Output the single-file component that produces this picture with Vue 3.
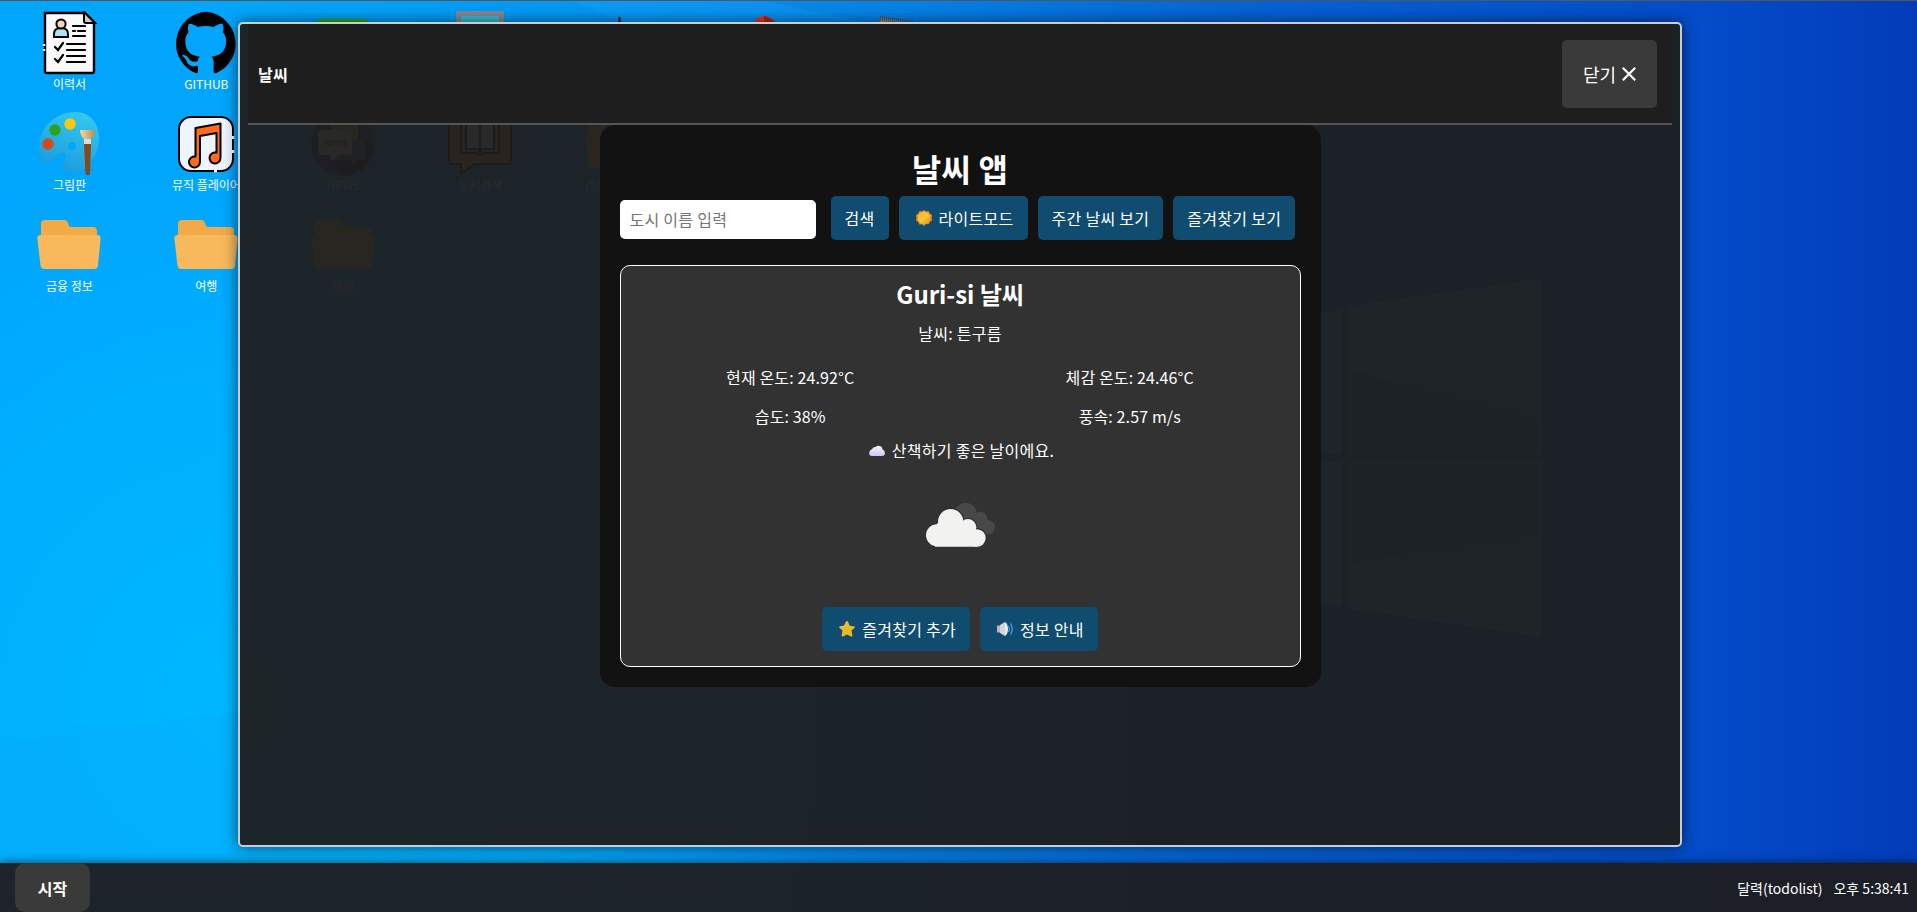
<script setup>
import { ref } from 'vue'

const city = ref('')

const desktopIcons = [
  { kind: 'resume', label: '이력서' },
  { kind: 'github', label: 'GITHUB' },
  { kind: 'green', label: '' },
  { kind: 'screen', label: '' },
  { kind: 'stick', label: '' },
  { kind: 'red', label: '' },
  { kind: 'note', label: '' },
  { kind: 'paint', label: '그림판', row: 2 },
  { kind: 'music', label: '뮤직 플레이어' },
  { kind: 'news', label: 'NEWS' },
  { kind: 'book', label: '도서검색' },
  { kind: 'folder', label: '(팀)프로젝트' },
  { kind: 'folder', label: '금융 정보', row: 3 },
  { kind: 'folder', label: '여행' },
  { kind: 'folder', label: '영화' },
]

const details = ['현재 온도: 24.92°C', '체감 온도: 24.46°C', '습도: 38%', '풍속: 2.57 m/s']
</script>

<template>
  <div class="desktop">
    <svg class="wallpaper" viewBox="0 0 1917 912" preserveAspectRatio="none">
      <defs>
        <linearGradient id="sky" x1="0" x2="1" y1="0" y2="0">
          <stop offset="0" stop-color="#00a5fc" />
          <stop offset="0.13" stop-color="#02a6fc" />
          <stop offset="0.32" stop-color="#0396f4" />
          <stop offset="0.48" stop-color="#0580e6" />
          <stop offset="0.65" stop-color="#0563d6" />
          <stop offset="0.88" stop-color="#034dcb" />
          <stop offset="1" stop-color="#033cb8" />
        </linearGradient>
        <radialGradient id="glow" gradientUnits="userSpaceOnUse" cx="240" cy="700" r="640">
          <stop offset="0" stop-color="#00b8ff" />
          <stop offset="0.5" stop-color="#00b2ff" stop-opacity="0.75" />
          <stop offset="1" stop-color="#00a8ff" stop-opacity="0" />
        </radialGradient>
      </defs>
      <rect width="1917" height="912" fill="url(#sky)" />
      <rect width="1000" height="912" fill="url(#glow)" />
      <path d="M0 744L238 712V912H0z" fill="#0aa8f5" opacity=".25" />
      <path d="M570 0L640 30H900L760 0z" fill="#1ca9ff" opacity=".25" />
      <g fill="#50b8d8" opacity=".6">
        <path d="M1349 307L1540 280V454H1349z" />
        <path d="M1349 462H1540V635L1349 608z" />
        <path d="M1140 337L1342 310V454H1140z" />
        <path d="M1140 462H1342V607L1140 580z" />
      </g>
      <path d="M1349 370L1540 418V454H1349zM1349 462H1540V536L1349 563z" fill="#0560d0" opacity=".4" />
      <path d="M1349 307L1540 280V454H1349zM1349 462H1540V635L1349 608z" fill="none" stroke="#7ae0e0" stroke-width="2" opacity=".4" />
    </svg>

    <ul class="icons">
      <li v-for="(item, i) in desktopIcons" :key="i" :class="['icon', item.row && 'row-start']">
        <svg v-if="item.kind === 'resume'" width="64" height="64" viewBox="0 0 64 64">
          <path d="M8 2h40l9 9v49a2 2 0 0 1-2 2H10a2 2 0 0 1-2-2z" fill="#fafafa" stroke="#000" stroke-width="2.4" />
          <path d="M47 1v9a2 2 0 0 0 2 2h9z" fill="#ccc" stroke="#000" stroke-width="2" />
          <path d="M17 26v-3q0-6 7-6t7 6v3z" fill="#a9e2fb" stroke="#000" stroke-width="2" />
          <circle cx="24" cy="13" r="4.6" fill="#ffd0bd" stroke="#000" stroke-width="2" />
          <path d="M36 15h12M36 20h2M41 20h7M36 25h12M30 33h18M30 39h18M30 45h18M30 51h18M18 36l3 3 5-7M18 48l3 3 5-7" fill="none" stroke="#000" stroke-width="2.2" stroke-linecap="round" />
          <path d="M7 33v2M7 38v2" stroke="#fff" stroke-width="2.5" />
        </svg>
        <svg v-else-if="item.kind === 'github'" width="64" height="64" viewBox="0 0 16 16">
          <path d="M8 .2a8 8 0 0 0-2.53 15.38c.4.07.53-.17.53-.39v-1.5c-2.05.4-2.6-.55-2.77-1.03-.09-.23-.48-.95-.82-1.14-.28-.15-.68-.52-.01-.53.63-.01 1.08.58 1.23.82.72 1.21 1.87.87 2.33.66.07-.52.28-.87.51-1.07-1.78-.2-3.64-.89-3.64-3.95 0-.87.31-1.59.82-2.15-.08-.2-.36-1.02.08-2.12 0 0 .67-.21 2.2.82a7.6 7.6 0 0 1 4 0c1.53-1.04 2.2-.82 2.2-.82.44 1.1.16 1.92.08 2.12.51.56.82 1.27.82 2.15 0 3.07-1.87 3.75-3.65 3.95.29.25.54.73.54 1.48v2.3c0 .21.15.46.55.38A8 8 0 0 0 8 .2z" fill="#000" />
        </svg>
        <svg v-else-if="item.kind === 'green'" width="64" height="64" viewBox="0 0 64 64">
          <rect x="5" y="8" width="54" height="52" rx="6" fill="#2fae12" />
        </svg>
        <svg v-else-if="item.kind === 'screen'" width="64" height="64" viewBox="0 0 64 64">
          <path d="M8 1q0-1 1-1h46q1 0 1 1v60H8z" fill="#858a94" />
          <rect x="13" y="5" width="38" height="50" fill="#38bfd8" />
        </svg>
        <svg v-else-if="item.kind === 'stick'" width="64" height="64" viewBox="0 0 64 64">
          <path d="M34.5 6v50" stroke="#000" stroke-width="2" />
        </svg>
        <svg v-else-if="item.kind === 'red'" width="64" height="64" viewBox="0 0 64 64">
          <path d="M42 5a16 16 0 0 1 14 16H28A16 16 0 0 1 42 5z" fill="#e23c26" />
          <path d="M42 5a16 16 0 0 1 14 16H42z" fill="#b82218" />
        </svg>
        <svg v-else-if="item.kind === 'note'" width="64" height="64" viewBox="0 0 64 64">
          <path d="M21 7L54 12 50 56 16 50z" fill="#a2927f" />
          <path d="M21 7L54 12" stroke="#555" stroke-width="5" stroke-dasharray="1 1" />
        </svg>
        <svg v-else-if="item.kind === 'paint'" width="64" height="64" viewBox="0 0 64 64">
          <defs>
            <linearGradient id="palette" x1=".7" x2=".3" y1="0" y2="1">
              <stop offset="0" stop-color="#35c6ee" />
              <stop offset="1" stop-color="#1b9bdc" />
            </linearGradient>
            <linearGradient id="bristle" x1="0" x2="1" y1="0" y2="0">
              <stop offset="0" stop-color="#f3d9a8" />
              <stop offset="1" stop-color="#b98d51" />
            </linearGradient>
          </defs>
          <path fill-rule="evenodd" d="M38 0C22 0 2 12 2 36c0 8 2 15 7 15 6 0 10-10 17-10 5 0 4 5 1 9-4 6 0 11 6 11 16 0 29-17 29-35C62 10 52 0 38 0zM35 30a4 4 0 1 1 0 8 4 4 0 0 1 0-8z" fill="url(#palette)" />
          <circle cx="33" cy="12" r="5.7" fill="#fdc70c" />
          <circle cx="18" cy="18" r="5.7" fill="#2ba31b" />
          <circle cx="11" cy="32" r="5.7" fill="#d94a17" />
          <path d="M47 32h7l-1 30q-2.500 2.500-4.500 0z" fill="#8a4813" />
          <path d="M47 27h7v5h-7z" fill="#d9dce0" />
          <path d="M43 18h15q-.5 6-4 9h-7q-3.500-3-4-9z" fill="url(#bristle)" />
        </svg>
        <svg v-else-if="item.kind === 'music'" width="64" height="64" viewBox="0 0 64 64">
          <rect x="5" y="5" width="54" height="54" rx="12" fill="#eff5ff" stroke="#000" stroke-width="2" />
          <path d="M21.500 16L46.500 11.500V46a5.500 5.500 0 1 1-4-5.300V21L26 24v26a5.500 5.500 0 1 1-4.500-5.500z" fill="#ff6a1f" stroke="#000" stroke-width="2" stroke-linejoin="round" />
          <path d="M59 24v3M59 38v3M40 59h3" stroke="#fff" stroke-width="2.5" />
        </svg>
        <svg v-else-if="item.kind === 'news'" width="64" height="64" viewBox="0 0 64 64">
          <circle cx="32" cy="32" r="32" fill="#24397a" />
          <path d="M32 64L22 48 56 26 63 34A32 32 0 0 1 32 64z" fill="#1c2340" />
          <rect x="20" y="6" width="27" height="22" rx="4" fill="#f2c04c" />
          <path d="M22 27h28a4 4 0 0 1 4 4v13a4 4 0 0 1-4 4h-5v6l-7-6H22z" fill="#277a6f" />
          <path d="M11 18h26a4 4 0 0 1 4 4v17a4 4 0 0 1-4 4h-9l-8 6v-6h-9a4 4 0 0 1-4-4V22a4 4 0 0 1 4-4z" fill="#f3f0ea" />
          <text x="24.500" y="34" text-anchor="middle" class="news-text">NEWS</text>
        </svg>
        <svg v-else-if="item.kind === 'book'" width="64" height="64" viewBox="0 0 64 64">
          <path d="M5 0h54q4 0 4 5v42q0 5-5 5H27L13 62V52H6q-5 0-5-5V5q0-5 4-5z" fill="#f0aa36" stroke="#111" stroke-width="2" />
          <path d="M13 10h38v31H36q-4 5-8 0H13z" fill="#eea12c" stroke="#111" stroke-width="2" />
          <path d="M18 5h12l2 3 2-3h12v32H34l-2 3-2-3H18zM32 8v32" fill="#f5f5f5" stroke="#111" stroke-width="2" />
        </svg>
        <svg v-else width="64" height="64" viewBox="0 0 64 64">
          <path d="M4 11q0-4 4-4h19q3 0 4 3l1 3q1 1 3 1h21q4 0 4 4v10H4z" fill="#f2aa49" />
          <path d="M4 22h56q4 0 3.600 4L61 52.500q-.5 3.500-4 3.500H7.500q-3.500 0-4-3.500L.4 26Q0 22 4 22z" fill="#f8b95c" />
        </svg>
        <span class="icon-label">{{ item.label }}</span>
      </li>
    </ul>

    <section class="window">
      <header class="window-head">
        <strong class="window-title">날씨</strong>
        <button class="close">
          <span>닫기</span>
          <svg width="14" height="14" viewBox="0 0 14 14"><path d="M.8.8l12.400 12.400M13.200.8L.8 13.200" stroke="#fff" stroke-width="2.200" /></svg>
        </button>
      </header>

      <main class="app">
        <h1>날씨 앱</h1>
        <div class="controls">
          <input v-model="city" placeholder="도시 이름 입력" />
          <button class="btn">검색</button>
          <button class="btn">
            <svg class="emoji" viewBox="0 0 16 16">
              <defs>
                <linearGradient id="sun" x1="0" x2="1" y1="0" y2="1"><stop offset="0" stop-color="#ffb92e" /><stop offset=".5" stop-color="#f9c634" /><stop offset="1" stop-color="#d9931f" /></linearGradient>
              </defs>
              <path d="M8 0l2 1.500 2.500-.5 1 2.300L16 5l-.4 2.700.4 2.600-2.200 1.600-1.200 2.400-2.600-.2L8 16l-2-1.700-2.600.1-1.200-2.300L0 10.400.5 8 0 5.300l2.300-1.700L3.500 1l2.500.5z" fill="#f58a1f" />
              <circle cx="8" cy="8" r="6.200" fill="url(#sun)" />
            </svg>
            라이트모드
          </button>
          <button class="btn">주간 날씨 보기</button>
          <button class="btn">즐겨찾기 보기</button>
        </div>

        <article class="card">
          <h2>Guri-si 날씨</h2>
          <p class="condition">날씨: 튼구름</p>
          <div class="details">
            <span v-for="d in details" :key="d">{{ d }}</span>
          </div>
          <p class="advice">
            <svg class="emoji" viewBox="0 0 16 16">
              <defs>
                <linearGradient id="puff" x1="0" x2="0" y1="0" y2="1"><stop offset="0" stop-color="#f7f4fc" /><stop offset="1" stop-color="#cfc5ee" /></linearGradient>
              </defs>
              <path d="M3 14a3 3 0 0 1-2.800-3.300Q.4 8 3 7.300 3.700 5 6.500 5 8 3.500 10 3.800q3 .4 3.600 3.600Q16 8 16 11q0 3-3 3z" fill="url(#puff)" />
            </svg>
            산책하기 좋은 날이에요.
          </p>
          <svg class="weather-art" width="100" height="100" viewBox="180 -15 300 300">
            <g fill="#48484a">
              <circle cx="347" cy="103" r="34" />
              <circle cx="391" cy="116" r="21" />
              <circle cx="413" cy="142" r="22" />
              <path d="M340 100H400V150H340z" />
            </g>
            <g class="front">
              <circle cx="261" cy="166" r="33" />
              <circle cx="302" cy="125" r="38" />
              <circle cx="354" cy="142" r="25" />
              <circle cx="381" cy="174" r="26" />
              <path d="M261 130H354L381 160V200H255z" />
            </g>
          </svg>
          <div class="actions">
            <button class="btn">
              <svg class="emoji" viewBox="0 0 16 16">
                <path d="M8 0q.8 0 1.200 1l1.500 3.700 4.100.5q1.800.5.6 1.800l-2.900 2.600.9 4.700q.1 1.700-1.400 1.200L8 13.500l-4 2q-1.500.5-1.400-1.200l.9-4.700L.6 7Q-.6 5.700 1.200 5.200l4.100-.5L6.800 1Q7.200 0 8 0z" fill="#e9b92b" />
                <path d="M7.500.3L5.300 4.700l-4.100.5 4.300.8z" fill="#f6d65a" />
              </svg>
              즐겨찾기 추가
            </button>
            <button class="btn">
              <svg class="emoji" viewBox="0 0 16 16">
                <path d="M0 4.500h3V11.500H0z" fill="#b9b3c2" />
                <path d="M3 4L8 1v14l-5-3z" fill="#d8d3dd" />
                <path d="M8 1q3 2 3 7t-3 7z" fill="#eeeaf2" />
                <path d="M11.500 5q1.500 3 0 6M13.500 2.500q3.500 5.500 0 11" fill="none" stroke="#3f9fe8" stroke-width="1.300" />
              </svg>
              정보 안내
            </button>
          </div>
        </article>
      </main>
    </section>

    <footer class="taskbar">
      <button class="start">시작</button>
      <div class="tray">
        <span class="calendar">달력(todolist)</span>
        <span class="clock">오후 5:38:41</span>
      </div>
    </footer>
  </div>
</template>

<style>
html,
body {
  margin: 0;
  overflow: hidden;
}
</style>

<style scoped>
* {
  box-sizing: border-box;
}
.desktop {
  position: relative;
  width: 1917px;
  height: 912px;
  overflow: hidden;
  border-top: 1px solid #555;
  color: #fff;
  font-family: 'Noto Sans CJK KR', 'Noto Sans', sans-serif;
  font-size: 16px;
  line-height: 24px;
}
button,
input {
  font: inherit;
  color: inherit;
  letter-spacing: inherit;
  border: 0;
}
h1,
h2,
p,
ul {
  margin: 0;
  padding: 0;
}
.wallpaper {
  position: absolute;
  top: -1px;
  left: 0;
  width: 1917px;
  height: 912px;
}
.icons {
  position: relative;
  display: grid;
  grid-template-columns: repeat(14, 1fr);
  grid-auto-rows: 101px;
  margin: 0 -1px 0 1px;
  padding-top: 10px;
  list-style: none;
}
.icon {
  display: flex;
  flex-direction: column;
  align-items: center;
}
.row-start {
  grid-column-start: 1;
}
.icon-label {
  font-size: 12px;
  line-height: 18px;
  white-space: nowrap;
}
.news-text {
  font: bold 8px 'Open Sans', sans-serif;
  fill: #e03040;
}
.window {
  position: absolute;
  left: 238px;
  top: 21px;
  width: 1444px;
  height: 825px;
  padding: 0 8px;
  border: 2px solid #ccc;
  border-radius: 5px;
  background: rgba(30, 30, 30, 0.95);
  box-shadow: 0 0 15px rgba(0, 0, 0, 0.6);
}
.window-head {
  display: flex;
  align-items: center;
  justify-content: space-between;
  height: 101px;
  padding: 0 15px 0 10px;
  border-bottom: 2px solid #555;
  background: #1e1e1e;
}
.window-title {
  letter-spacing: 0.28px;
}
.close {
  display: flex;
  align-items: center;
  justify-content: center;
  gap: 6px;
  width: 95px;
  height: 68px;
  padding: 0;
  border-radius: 5px;
  background: #3a3a3a;
  font-size: 18px;
}
.app {
  width: 721px;
  height: 562px;
  margin: 0 auto;
  padding: 19px 20px 20px;
  border-radius: 15px;
  background: #121212;
  letter-spacing: 0.28px;
}
h1 {
  padding-bottom: 3px;
  font-size: 32px;
  line-height: 49px;
  text-align: center;
}
.controls {
  display: flex;
  align-items: center;
  gap: 10px;
  height: 44px;
}
.controls input {
  width: 196px;
  height: 39px;
  margin: 2px 5px 0 0;
  padding: 0 10px 1px;
  border-radius: 5px;
  background: #fff;
  color: #222;
}
.controls input::placeholder {
  color: #757575;
}
.btn {
  display: flex;
  align-items: center;
  height: 44px;
  padding: 0 14px;
  border-radius: 5px;
  background: #0f4c6f;
  white-space: nowrap;
}
.emoji {
  width: 16px;
  height: 16px;
  margin: 0 7px 0 3px;
  flex: none;
}
.card {
  display: flex;
  flex-direction: column;
  align-items: center;
  height: 402px;
  margin-top: 25px;
  padding-top: 10px;
  border: 1px solid #fff;
  border-radius: 10px;
  background: #323232;
}
h2 {
  font-size: 24px;
  line-height: 36px;
  letter-spacing: -0.05px;
}
.condition {
  margin-top: 9px;
}
.details {
  display: grid;
  grid-template-columns: 1fr 1fr;
  row-gap: 15px;
  width: 100%;
  margin-top: 20px;
  text-align: center;
  letter-spacing: 0.12px;
}
.advice {
  display: flex;
  align-items: center;
  margin-top: 10px;
}
.weather-art {
  margin-top: 13px;
}
.front {
  fill: #f2f2f0;
  filter: drop-shadow(2px -3px 1px #2a2a2a);
}
.actions {
  display: flex;
  gap: 10px;
  margin-top: 32px;
}
.taskbar {
  position: absolute;
  left: 0;
  right: 0;
  bottom: 0;
  display: flex;
  align-items: center;
  justify-content: space-between;
  height: 49px;
  padding: 0 8px 0 15px;
  background: rgba(30, 30, 30, 0.95);
  box-shadow: 0 0 10px rgba(0, 0, 0, 0.6);
}
.start {
  width: 75px;
  height: 49px;
  border-radius: 10px;
  background: #3a3a3a;
  font-weight: 700;
}
.tray {
  display: flex;
  gap: 11px;
  font-size: 14px;
}
</style>
